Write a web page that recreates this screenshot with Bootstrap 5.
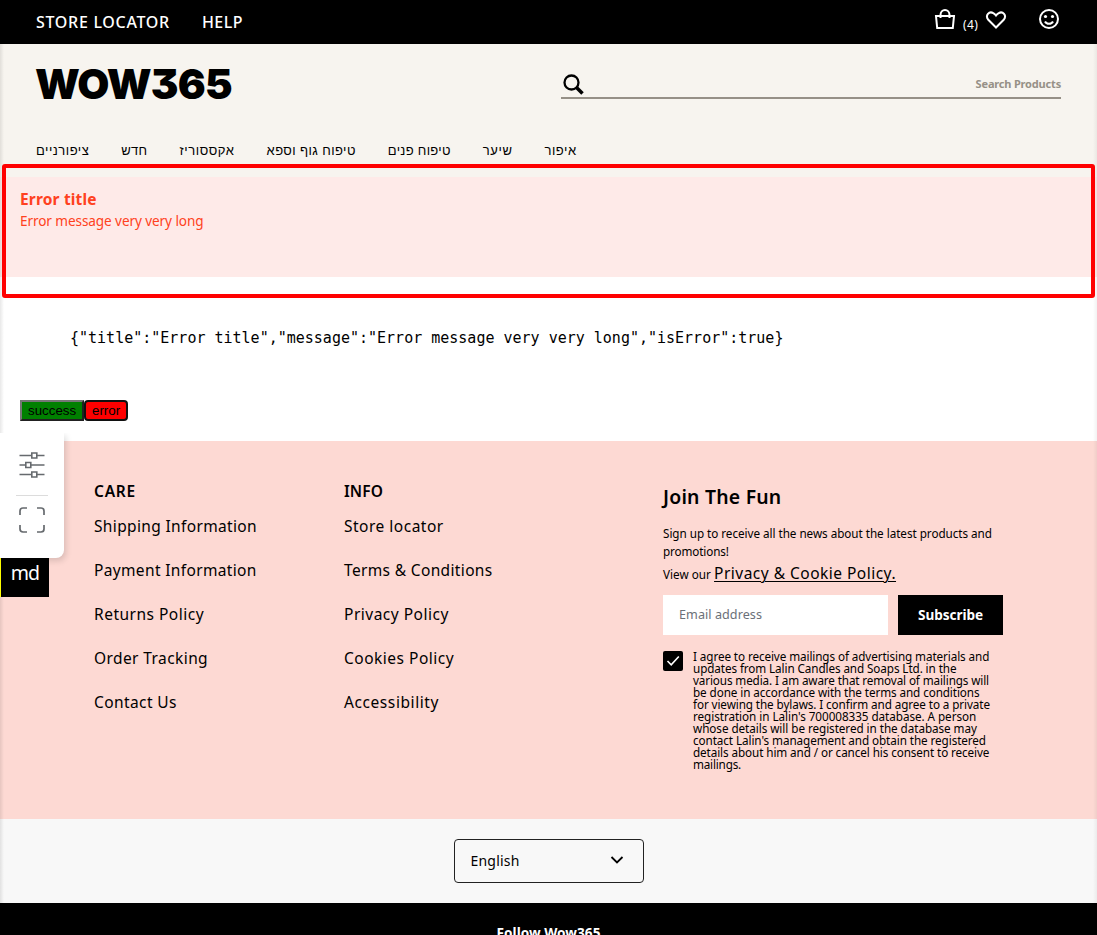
<!DOCTYPE html>
<html lang="en">
<head>
<meta charset="utf-8">
<meta name="viewport" content="width=device-width, initial-scale=1">
<title>WOW365</title>
<link rel="stylesheet" href="https://cdn.jsdelivr.net/npm/bootstrap@5.3.0/dist/css/bootstrap.min.css">
<style>
html,body{height:935px;overflow:hidden}
body{font-family:"Noto Sans","Open Sans",sans-serif;color:#000;background:#fff;position:relative}
a{color:inherit;text-decoration:none}
span,a{white-space:nowrap}
.topbar{height:44px;padding:0 36px;background:#000;color:#fff;font-size:16px;font-weight:500;line-height:44px}
.gap-32{gap:32px}
.i-bag{margin-top:8px}.i-heart{margin-top:9px}.i-face{margin:8px 1px 0 31px}
.bag-count{font-size:12px;font-weight:400;line-height:16px;width:15px;margin:17px 7px 0 7px}
.masthead{height:133px;background:#f7f4ef;padding:0 36px}
.brand{font:900 41.5px/60px Inter,sans-serif;font-feature-settings:"cv09";height:60px;margin:10px 0 0 -1px;letter-spacing:-.8px}
.search-line{width:500px;height:29px;margin-top:26px;border-bottom:2px solid #969087;color:#969087;font-size:11px;font-weight:700;line-height:28px;letter-spacing:-.18px}
.i-search{margin:3px 0 0 1px}
.cats{font:13px/18px "Liberation Sans",sans-serif;margin-top:28px}
.notice{height:100px;background:#feeae8;color:#ff4120;padding:11px 20px}
.notice-title{font-size:15.5px;font-weight:700;line-height:23px;letter-spacing:.17px}
.notice-text{font-size:13.6px;line-height:20px;letter-spacing:-.1px}
.demo{height:164px;padding:51px 20px 0}
.json{font:15px/20px "DejaVu Sans Mono",monospace;padding-left:50px;white-space:pre;height:72px}
.demo button{font:13.33px/15px "Liberation Sans",sans-serif;height:21px;padding:1px 6px;color:#000}
.b-ok{background:green;border:2px outset #767676;width:64px}
.b-err{background:red;border:2px solid #101010;border-radius:4px;width:44px}
.foot{height:378px;background:#fdd9d3;padding:39px 94px 0 94px}
.foot>div{flex-shrink:0}
.col-a{width:250px}.col-b{width:319px}.col-c{width:341px}
.foot h3{font-size:15.5px;font-weight:600;line-height:22px;margin:0 0 13px}
.foot .links{font-size:15.5px;line-height:22px;gap:22px}
.foot h2{font-size:19.4px;font-weight:600;line-height:28px;margin:3px 0 13px;letter-spacing:.22px}
.small-copy{font-size:11.7px;line-height:18px}
.view-line{line-height:26px;padding-top:1px}
.small-copy a{font-size:15.5px;letter-spacing:.486px;text-decoration:underline 1px;text-underline-offset:2px;line-height:20px}
.mail-row{gap:10px;margin-top:8px}
.mail{width:225px;height:40px;background:#fff;color:#6b7078;font-size:12.6px;line-height:40px;padding-left:16px;letter-spacing:.054px}
.subscribe{width:105px;height:40px;background:#000;color:#fff;font-size:13.6px;font-weight:700;line-height:40px;letter-spacing:-.068px}
.agree{gap:10px;margin-top:16px}
.tick{width:20px;height:20px;background:#000;border-radius:2px}
.consent{font-size:11.7px;line-height:12px;margin-top:-1px;letter-spacing:-.09px}
.lang-band{height:84px;background:#f8f8f8;padding-top:20px}
.lang{width:190px;height:44px;border:1px solid #222;border-radius:4px;padding:0 19px 2px 16px;font-size:14px;margin:0 auto;letter-spacing:.194px}
.follow{height:32px;background:#000;color:#fff;font-size:13.6px;font-weight:700;line-height:20px;padding-top:20px;overflow:hidden}
.frame{position:absolute;left:2px;top:164px;width:1093px;height:134px;border:4px solid red;border-radius:3px}
.edge{position:absolute;top:44px;bottom:32px;width:4px;pointer-events:none}
.edge-l{left:0;background:linear-gradient(90deg,rgba(0,0,0,.09),transparent)}
.edge-r{right:0;background:linear-gradient(270deg,rgba(0,0,0,.05),transparent)}
.tools{position:absolute;left:0;top:433px;width:64px;height:125px;background:#fff;border-radius:0 0 8px 0;box-shadow:2px 3px 6px rgba(0,0,0,.14);padding:18px 16px 0;clip-path:inset(0 -12px -12px 0)}
.tools hr{margin:16px 0 10px;border-color:#dcdcdc;opacity:1}
.md-flag{position:absolute;left:0;top:550px;width:49px;height:47px;background:#000;border-left:1px solid #ff0;color:#fff;font-size:19.5px;line-height:45px;letter-spacing:-.8px}
/* tracking steps */
.t03{letter-spacing:.03px}.t10{letter-spacing:.105px}.t30{letter-spacing:.3px}.t35{letter-spacing:.35px}.t41{letter-spacing:.407px}.t46{letter-spacing:.457px}.t50{letter-spacing:.5px}.t58{letter-spacing:.584px}.t70{letter-spacing:.7px}.t77{letter-spacing:.77px}
.n03{letter-spacing:-.034px}.n05{letter-spacing:-.05px}.n07{letter-spacing:-.075px}.n12{letter-spacing:-.118px}.n19{letter-spacing:-.188px}
</style>
</head>
<body>
<header class="topbar d-flex justify-content-between">
  <nav class="d-flex gap-32"><a class="t70">STORE LOCATOR</a><a class="t46">HELP</a></nav>
  <div class="d-flex">
    <svg class="i-bag" width="22" height="22" viewBox="0 0 22 22" fill="none" stroke="#fff" stroke-width="2"><path d="M2 8h18l-1.200 12H3.200zM6.500 10V7a4.500 5 0 0 1 9 0V10"/></svg>
    <div class="bag-count"><span class="t35">(4)</span></div>
    <svg class="i-heart" width="22" height="22" viewBox="0 0 22 22" fill="none" stroke="#fff" stroke-width="2"><path d="M11 18.500L3.300 10.800C-.2 6.500 4.200 1.700 8.300 4.100Q10 5 11 6.500Q12 5 13.700 4.100C17.800 1.700 22.200 6.500 18.700 10.800Z"/></svg>
    <svg class="i-face" width="22" height="22" viewBox="0 0 22 22" fill="none" stroke="#fff" stroke-width="2"><circle cx="11" cy="11" r="9"/><path d="M7 13.500c1.500 3 6.500 3 8 0"/><g fill="#fff" stroke="none"><circle cx="7.500" cy="8.500" r="1.600"/><circle cx="14.500" cy="8.500" r="1.600"/></g></svg>
  </div>
</header>
<section class="masthead d-flex flex-column">
  <div class="d-flex justify-content-between">
    <div class="brand">WOW365</div>
    <div class="search-line d-flex justify-content-between">
      <svg class="i-search" width="24" height="24" viewBox="0 0 24 24" fill="none" stroke="#000"><circle cx="9.500" cy="9.500" r="7" stroke-width="2.300"/><path d="M14.500 14.500l6 6" stroke-width="3.500"/></svg>
      <span>Search Products</span>
    </div>
  </div>
  <nav class="cats d-flex gap-32"><a class="t50">ציפורניים</a><a class="t30">חדש</a><a class="t58">אקססוריז</a><a class="t41">טיפוח גוף וספא</a><a class="t30">טיפוח פנים</a><a class="t58">שיער</a><a class="t50">איפור</a></nav>
</section>
<div class="notice"><div class="notice-title">Error title</div><div class="notice-text">Error message very very long</div></div>
<main class="demo">
  <div class="json">{"title":"Error title","message":"Error message very very long","isError":true}</div>
  <div class="d-flex"><button class="b-ok">success</button><button class="b-err">error</button></div>
</main>
<footer>
<section class="foot d-flex">
  <div class="col-a"><h3 class="t77">CARE</h3><div class="links d-flex flex-column align-items-start"><a class="t35">Shipping Information</a><a class="t35">Payment Information</a><a class="t50">Returns Policy</a><a class="t41">Order Tracking</a><a class="t41">Contact Us</a></div></div>
  <div class="col-b"><h3 class="t10">INFO</h3><div class="links d-flex flex-column align-items-start"><a class="t50">Store locator</a><a class="t35">Terms &amp; Conditions</a><a class="t50">Privacy Policy</a><a class="t50">Cookies Policy</a><a class="t58">Accessibility</a></div></div>
  <div class="col-c">
    <h2>Join The Fun</h2>
    <div class="small-copy"><span class="n03">Sign up to receive all the news about the latest products and</span><br><span class="n12">promotions!</span></div>
    <div class="small-copy view-line"><span class="t03">View our</span> <a href="#">Privacy &amp; Cookie Policy.</a></div>
    <div class="mail-row d-flex"><div class="mail">Email address</div><div class="subscribe text-center">Subscribe</div></div>
    <div class="agree d-flex"><div class="tick"><svg class="d-block" width="20" height="20" fill="none" stroke="#fff" stroke-width="1.600"><path d="M4.500 10l3.700 3.800L15.800 5.500"/></svg></div>
    <div class="consent"><span>I agree to receive mailings of advertising materials and</span><br><span>updates from Lalin Candles and Soaps Ltd. in the</span><br><span class="n12">various media. I am aware that removal of mailings will</span><br><span>be done in accordance with the terms and conditions</span><br><span>for viewing the bylaws. I confirm and agree to a private</span><br><span class="n05">registration in Lalin's 700008335 database. A person</span><br><span class="n05">whose details will be registered in the database may</span><br><span class="n07">contact Lalin's management and obtain the registered</span><br><span>details about him and / or cancel his consent to receive</span><br><span class="n19">mailings.</span></div></div>
  </div>
</section>
<div class="lang-band"><div class="lang d-flex justify-content-between align-items-center"><span>English</span><svg width="14" height="10" fill="none" stroke="#000" stroke-width="1.800"><path d="M1.500 2L7 7.500l5.500-5.500"/></svg></div></div>
<div class="follow text-center"><span class="t03">Follow Wow365</span></div>
</footer>
<div class="edge edge-l"></div><div class="edge edge-r"></div>
<div class="frame"></div>
<div class="md-flag text-center">md</div>
<aside class="tools">
<svg class="d-block" width="32" height="28" fill="none" stroke="#666a6e" stroke-width="1.600"><path d="M3.500 4.500h12m5 0h8M3.500 14h6m5 0h14M3.500 23.500h12m5 0h8M15.800 2h5v5h-5zM9.800 11.500h5v5h-5zM15.800 21h5v5h-5z"/></svg>
<hr>
<svg class="d-block" width="32" height="28" fill="none" stroke="#666a6e" stroke-width="1.700"><path d="M4 9V5q0-3 3-3h4M21 2h4q3 0 3 3v4M28 19v4q0 3-3 3h-4M11 26H7q-3 0-3-3v-4"/></svg>
</aside>
<script src="https://cdn.jsdelivr.net/npm/bootstrap@5.3.0/dist/js/bootstrap.bundle.min.js"></script>
</body>
</html>
